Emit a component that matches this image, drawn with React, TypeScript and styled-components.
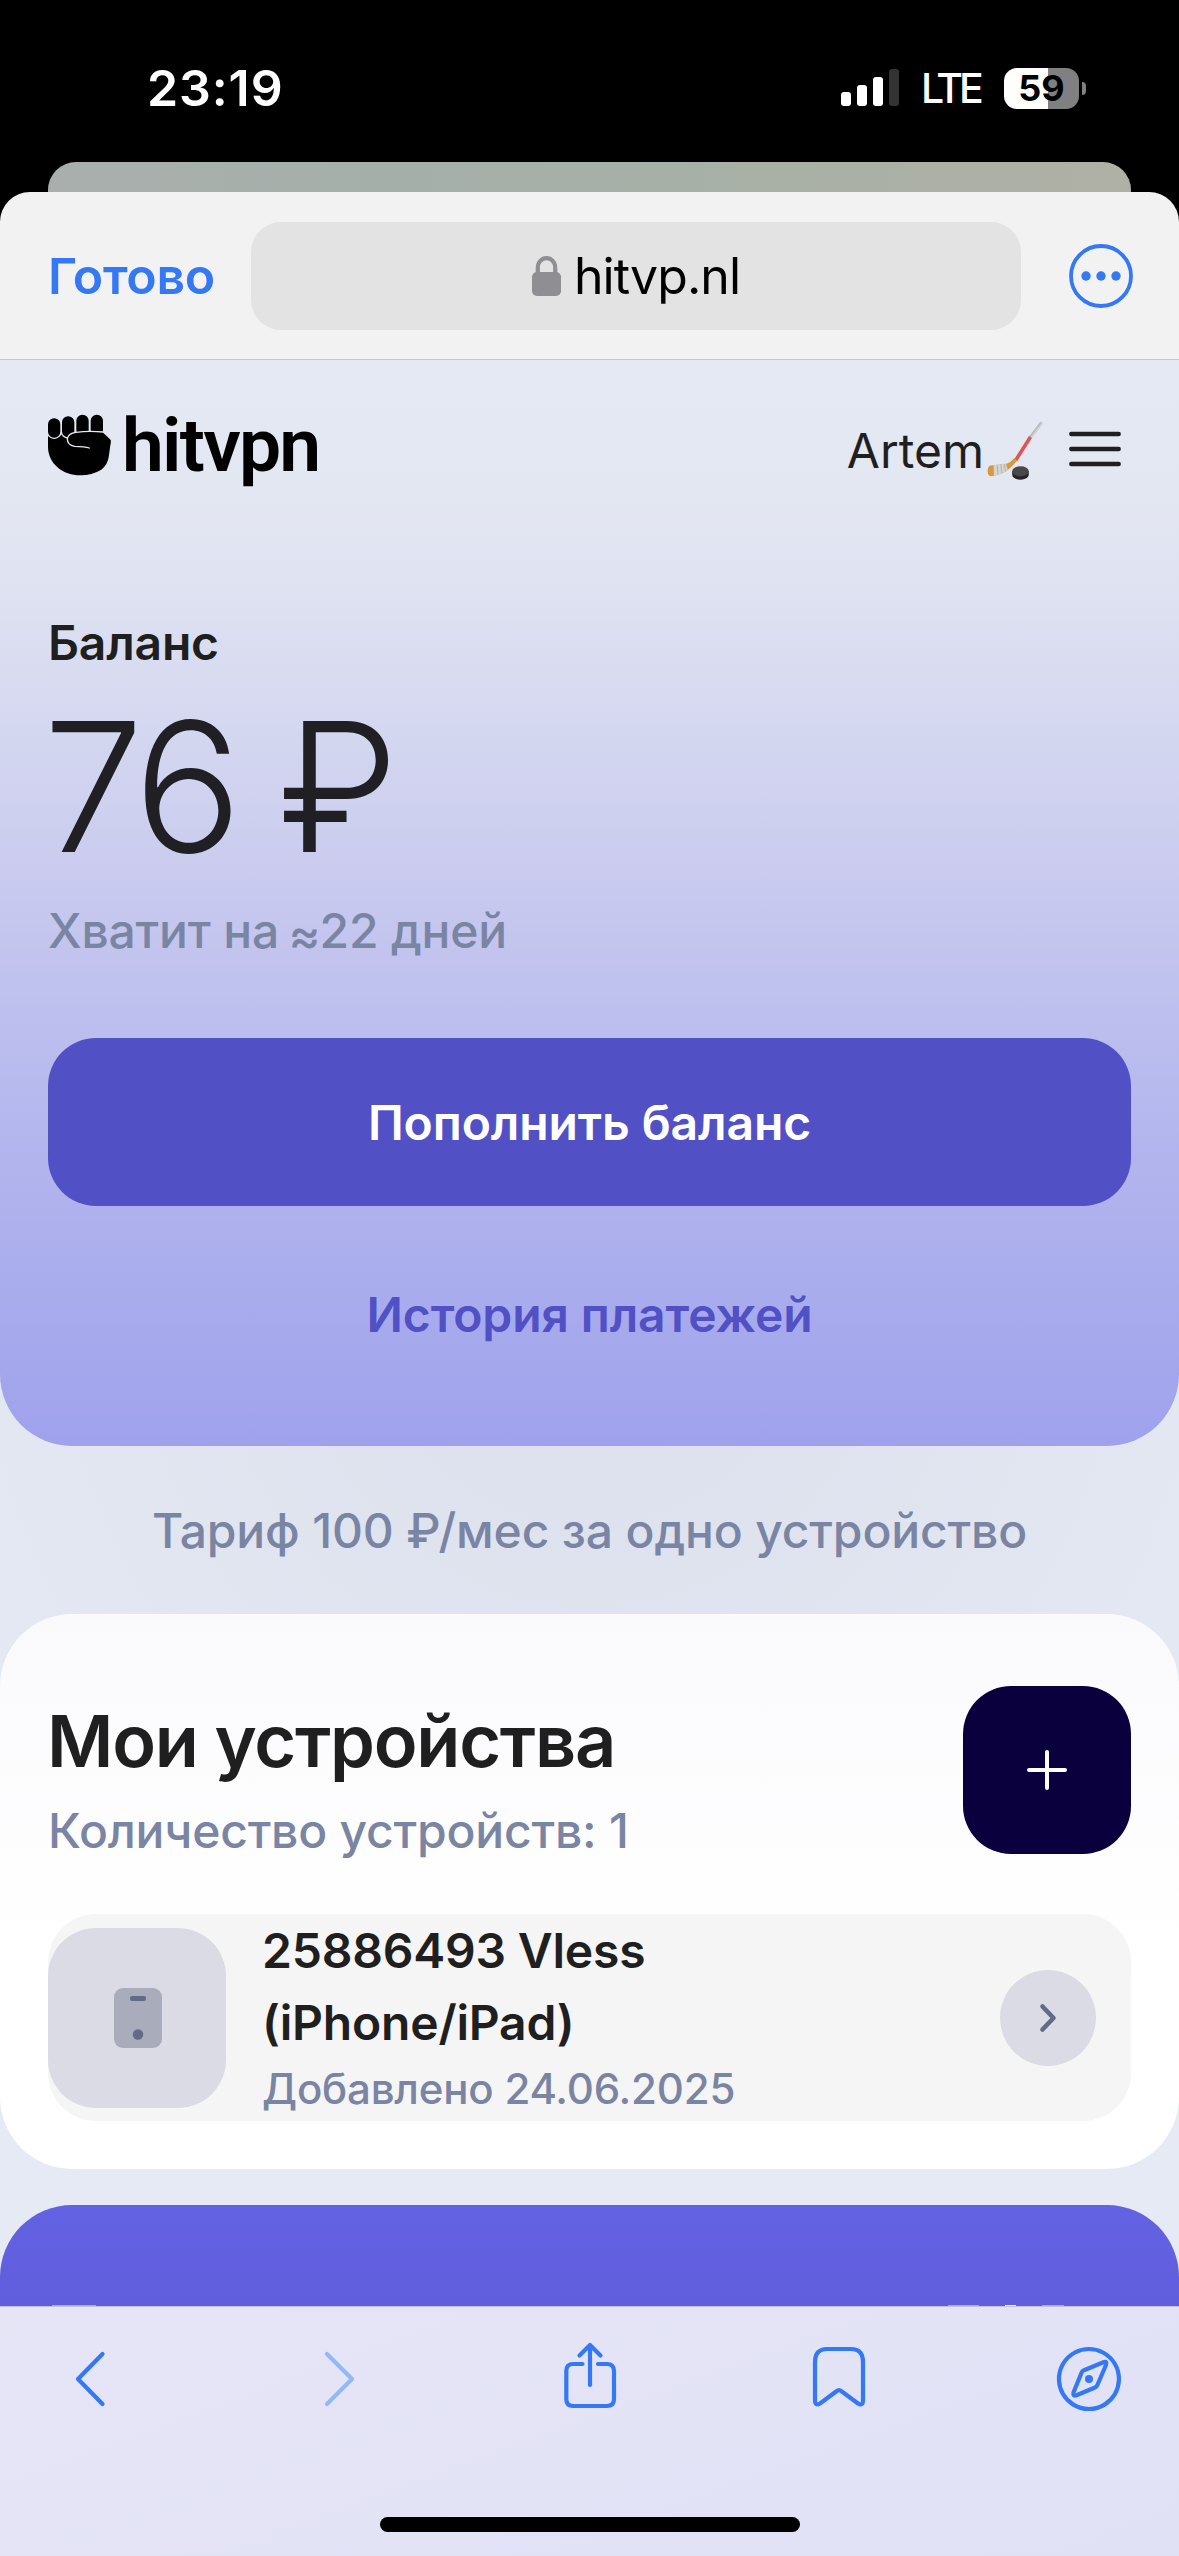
import React from "react";
import styled, { createGlobalStyle } from "styled-components";

const Global = createGlobalStyle`
  * { box-sizing: border-box; }
  body { margin: 0; background: #000; font-family: Inter, "Liberation Sans", sans-serif; }
  button { border: 0; padding: 0; background: none; font: inherit; }
  svg { display: block; flex: none; overflow: visible; }
`;

const Screen = styled.div`
  width: 1179px;
  height: 2556px;
  display: flex;
  flex-direction: column;
  overflow: hidden;
  background: #000;
`;

/* Status bar */
const StatusBar = styled.div`
  height: 162px;
  flex: none;
  display: flex;
  justify-content: space-between;
  padding: 58px 93px 0 147px;
`;
const Clock = styled.div`
  font-size: 50px;
  font-weight: 600;
  line-height: 60px;
  letter-spacing: 0.9px;
  color: #fff;
`;
const StatusIcons = styled.div`
  display: flex;
  align-items: center;
  height: 60px;
`;
const Network = styled.span`
  margin-left: 22px;
  width: 83px;
  font-size: 41px;
  font-weight: 500;
  line-height: 60px;
  letter-spacing: -4px;
  color: #fff;
`;
const Battery = styled.div`
  width: 75px;
  height: 41px;
  border-radius: 13px;
  background: linear-gradient(90deg, #fff 44px, #808080 44px);
  display: flex;
  align-items: center;
  justify-content: center;
  font-size: 36px;
  font-weight: 700;
  color: #000;
`;
const BatteryTip = styled.div`
  width: 4px;
  height: 13px;
  margin-left: 3px;
  border-radius: 0 4px 4px 0;
  background: #808080;
`;

/* Sheet */
const BackCard = styled.div`
  height: 30px;
  flex: none;
  margin: 0 48px;
  border-radius: 28px 28px 0 0;
  background: linear-gradient(90deg, #aaafad 0%, #a5afaa 30%, #a6b0a7 55%, #adb0a6 85%, #afb0a6 100%);
`;
const Toolbar = styled.div`
  height: 168px;
  flex: none;
  display: flex;
  align-items: center;
  justify-content: space-between;
  padding: 0 46px 0 48px;
  border-radius: 30px 30px 0 0;
  border-bottom: 1px solid #c6c6c8;
  background: #f2f2f2;
`;
const Done = styled.button`
  width: 203px;
  text-align: left;
  font-size: 50px;
  font-weight: 600;
  letter-spacing: -0.3px;
  color: #3478f6;
`;
const AddressField = styled.div`
  width: 770px;
  height: 108px;
  border-radius: 30px;
  background: #e3e3e3;
  display: flex;
  align-items: center;
  justify-content: center;
  gap: 13px;
  font-size: 50px;
  letter-spacing: -0.95px;
  color: #000;
`;
const MoreButton = styled.button`
  margin-left: auto;
`;

/* Page */
const Page = styled.main`
  height: 1946px;
  flex: none;
  overflow: hidden;
  background:
    radial-gradient(circle 820px at 590px 950px, rgba(208, 213, 228, 0.5), rgba(208, 213, 228, 0) 100%),
    #e6eaf4;
`;
const Hero = styled.section`
  height: 1086px;
  padding: 0 48px 48px;
  border-radius: 0 0 72px 72px;
  background: linear-gradient(
    180deg,
    #e5e9f3 0%,
    #e3e7f2 12%,
    #dfe2f1 21%,
    #d5d8f0 33%,
    #c9caee 48%,
    #bec0ee 59%,
    #b2b5ed 73%,
    #a8abec 87%,
    #a0a1ed 100%
  );
`;
const SiteHeader = styled.header`
  height: 180px;
  display: flex;
  align-items: center;
`;
const Logo = styled.div`
  display: flex;
  align-items: center;
  gap: 10px;
  padding-bottom: 10px;
  font-family: Roboto, Inter, sans-serif;
  font-size: 75px;
  font-weight: 600;
  line-height: 88px;
  letter-spacing: -1.8px;
  color: #000;
`;
const User = styled.div`
  margin-left: auto;
  display: flex;
  align-items: center;
  gap: 2px;
  font-size: 48px;
  color: #1f1f1f;
`;
const MenuButton = styled.button`
  margin: 0 10px 3px 24px;
`;
const Balance = styled.div`
  padding-top: 67px;
  display: flex;
  flex-direction: column;
  gap: 18px;
`;
const Label = styled.div`
  font-size: 48px;
  font-weight: 600;
  line-height: 72px;
  letter-spacing: -0.2px;
  color: #1f1f1f;
`;
const Amount = styled.div`
  margin-left: -5px;
  font-size: 180px;
  font-weight: 300;
  line-height: 180px;
  letter-spacing: -7.2px;
  color: #202024;
`;
const Muted = styled.div<{ $size?: number; $line?: number }>`
  font-size: ${(p) => p.$size ?? 48}px;
  font-weight: 500;
  line-height: ${(p) => p.$line ?? 72}px;
  letter-spacing: -0.2px;
  color: #7a84a3;
`;
const Approx = styled.span`
  display: inline-block;
  width: 30px;
  margin-left: -2px;
  line-height: 1;
  text-indent: -1px;
  vertical-align: -4px;
`;
const Button = styled.button<{ $filled?: boolean }>`
  display: block;
  width: 100%;
  height: 168px;
  margin-top: ${(p) => (p.$filled ? 71 : 24)}px;
  border-radius: 48px;
  background: ${(p) => (p.$filled ? "#5150c5" : "transparent")};
  color: ${(p) => (p.$filled ? "#fff" : "#5150c5")};
  font-size: 48px;
  font-weight: 600;
  letter-spacing: -0.1px;
`;
const Tariff = styled.div`
  height: 168px;
  display: flex;
  align-items: center;
  justify-content: center;
  font-size: 48px;
  font-weight: 500;
  letter-spacing: -0.15px;
  color: #7a84a3;
`;
const Devices = styled.section`
  height: 555px;
  padding: 72px 48px 48px;
  border-radius: 72px;
  background: linear-gradient(180deg, #fafafd 0%, #fdfdfe 40%, #fff 65%);
`;
const DevicesHeader = styled.div`
  height: 168px;
  margin-bottom: 60px;
  display: flex;
  justify-content: space-between;
`;
const Title = styled.h2`
  margin: 1px 0 0 -1px;
  font-size: 72px;
  font-weight: 600;
  line-height: 108px;
  letter-spacing: -1.25px;
  color: #1f1f1f;
`;
const AddButton = styled.button`
  width: 168px;
  height: 168px;
  border-radius: 48px;
  background: #09003d;
  display: flex;
  align-items: center;
  justify-content: center;
`;
const DeviceRow = styled.div`
  height: 207px;
  border-radius: 48px;
  background: #f5f5f5;
  display: flex;
  align-items: center;
  padding-right: 35px;
`;
const DeviceIcon = styled.div`
  width: 178px;
  height: 180px;
  padding-left: 2px;
  border-radius: 48px;
  background: #dadbe4;
  display: flex;
  align-items: center;
  justify-content: center;
`;
const DeviceText = styled.div`
  flex: 1;
  height: 207px;
  padding-top: 1px;
  margin-left: 36px;
`;
const DeviceName = styled.div`
  width: 480px;
  font-size: 48px;
  font-weight: 600;
  line-height: 72px;
  letter-spacing: -0.2px;
  color: #1f1f1f;
`;
const Round = styled.div`
  width: 96px;
  height: 96px;
  border-radius: 50%;
  background: #dadbe4;
  display: flex;
  align-items: center;
  justify-content: center;
`;
const Promo = styled.section`
  height: 400px;
  margin-top: 36px;
  padding: 100px 115px 0 52px;
  border-radius: 72px;
  background: linear-gradient(180deg, #6362e2, #605edd 100px, #5f5dda);
  display: flex;
  justify-content: space-between;
`;
const Glyphs = styled.div`
  display: flex;
  gap: 26px;
`;
const Sliver = styled.i<{ $w: number; $a: number }>`
  width: ${(p) => p.$w}px;
  height: 1px;
  background: rgba(255, 255, 255, ${(p) => p.$a});
`;

/* Bottom bar */
const BottomBar = styled.nav`
  flex: 1;
  display: flex;
  flex-direction: column;
  align-items: center;
  justify-content: space-between;
  padding: 36px 0 24px;
  border-top: 1px solid #c2c1cd;
  background: linear-gradient(160deg, #e6e5f6 0%, #e4e4f6 35%, #e1e2f5 70%, #e1e1f5 100%);
`;
const Tabs = styled.div`
  width: 100%;
  padding: 0 54px;
  display: flex;
  justify-content: space-between;
`;
const HomeIndicator = styled.div`
  width: 420px;
  height: 15px;
  border-radius: 8px;
  background: #000;
`;

const Signal = () => (
  <svg width="58" height="38" viewBox="0 0 58 38">
    <rect x="0" y="23" width="10" height="14" rx="3" fill="#fff" />
    <rect x="16" y="16" width="10" height="21" rx="3" fill="#fff" />
    <rect x="32" y="8" width="10" height="29" rx="3" fill="#fff" />
    <rect x="48" y="0" width="10" height="37" rx="3" fill="#333" />
  </svg>
);

const Lock = () => (
  <svg width="29" height="40" viewBox="0 0 29 40">
    <rect x="0" y="16" width="29" height="24" rx="5" fill="#8e8e93" />
    <path d="M5.8 19V11.5a8.700 9.300 0 0 1 17.400 0V19" fill="none" stroke="#8e8e93" strokeWidth="4.2" />
  </svg>
);

const Fist = () => (
  <svg width="64" height="62" viewBox="24 20 192 186">
    <path d="M24 84L190 74L212 95Q214 104 211 114L206 150Q202 174 184 187Q155 204 122 204C68 204 24 168 24 118Z" fill="#000" />
    <g stroke="#e5e9f3" strokeWidth="4">
      <rect x="64" y="25" width="41" height="67" rx="20" />
      <rect x="107" y="20" width="41" height="70" rx="20" />
      <rect x="150" y="20" width="41" height="70" rx="20" />
      <rect x="22" y="31" width="41" height="62" rx="20" />
    </g>
    <path d="M148 122Q135 117 104 117Q82 113 82 95Q84 78 108 75Q145 70 190 74L211 94L200 150L150 150Z" fill="#000" />
    <path d="M148 122Q135 117 104 117Q82 113 82 95Q84 78 108 75Q145 70 190 74L213 96" fill="none" stroke="#e5e9f3" strokeWidth="4" strokeLinecap="round" />
  </svg>
);

const Hockey = () => (
  <svg width="59" height="62" viewBox="18 16 178 186">
    <path d="M186 26L151 72" stroke="#b9bdc2" strokeWidth="10" />
    <path d="M188 28L154 72" stroke="#dfe1e4" strokeWidth="3" />
    <path d="M152 70L107 141" stroke="#dd5656" strokeWidth="11" />
    <path d="M103 133L112 141Q98 160 80 172Q60 184 32 188Q23 187 23 172Q23 158 32 156L76 151Q92 148 103 133Z" fill="#d9973f" />
    <path d="M41 155L78 150L84 169Q66 182 42 186Z" fill="#d5d5d0" />
    <path d="M52 154L54 183M63 152L66 179M73 151L77 174" stroke="#aaa9a3" strokeWidth="2.5" />
    <path d="M97 174V184A25 15 0 0 0 147 184V174Z" fill="#252527" />
    <ellipse cx="122" cy="173" rx="25" ry="15" fill="#48484a" />
  </svg>
);

const tabIcons: { d: string; color?: string; dot?: boolean }[] = [
  { d: "M48.5 11L24 36L48.5 61" },
  { d: "M23 11L48 36L23 61", color: "#92b8f7" },
  { d: "M28.5 21H19Q12.3 21 12.3 28V56Q12.3 63 19 63H53Q60 63 60 56V28Q60 21 53 21H44M36 42V2M25.5 12.5L36 2L46.5 12.5" },
  { d: "M12 57V19Q12 6 24 6H48Q60 6 60 19V57Q60 63.5 55 60.5L38.5 48.2Q36 46.2 33.5 48.2L17 60.5Q12 63.5 12 57Z" },
  { d: "M36 6A30 30 0 1 1 35.9 6ZM51 19L31 27.2Q29.2 28 28.5 29.8L20.5 49.5Q19.5 53.5 23.5 52.3L42 44.5Q43.7 43.7 44.4 42L53 22Q54.2 18 51 19Z", dot: true },
];

export default function App() {
  return (
    <Screen>
      <Global />
      <StatusBar>
        <Clock>23:19</Clock>
        <StatusIcons>
          <Signal />
          <Network>LTE</Network>
          <Battery>59</Battery>
          <BatteryTip />
        </StatusIcons>
      </StatusBar>
      <BackCard />
      <Toolbar>
        <Done>Готово</Done>
        <AddressField>
          <Lock />
          hitvp.nl
        </AddressField>
        <MoreButton>
          <svg width="64" height="64" viewBox="0 0 64 64" fill="#3478f6">
            <circle cx="32" cy="32" r="30" fill="none" stroke="#3478f6" strokeWidth="3.8" />
            <circle cx="17" cy="32" r="4.7" />
            <circle cx="32" cy="32" r="4.7" />
            <circle cx="47" cy="32" r="4.7" />
          </svg>
        </MoreButton>
      </Toolbar>
      <Page>
        <Hero>
          <SiteHeader>
            <Logo>
              <Fist />
              hitvpn
            </Logo>
            <User>
              Artem
              <Hockey />
            </User>
            <MenuButton>
              <svg width="52" height="36" viewBox="0 0 52 36">
                <path d="M2.3 3H49.7M2.3 18H49.7M2.3 33H49.7" stroke="#1f1f1f" strokeWidth="4.4" strokeLinecap="round" />
              </svg>
            </MenuButton>
          </SiteHeader>
          <Balance>
            <Label>Баланс</Label>
            <Amount>76 ₽</Amount>
            <Muted>
              Хватит на <Approx>≈</Approx>22 дней
            </Muted>
          </Balance>
          <Button $filled>Пополнить баланс</Button>
          <Button>История платежей</Button>
        </Hero>
        <Tariff>Тариф 100 ₽/мес за одно устройство</Tariff>
        <Devices>
          <DevicesHeader>
            <div>
              <Title>Мои устройства</Title>
              <Muted>Количество устройств: 1</Muted>
            </div>
            <AddButton>
              <svg width="40" height="40" viewBox="0 0 40 40">
                <path d="M20 2V38M2 20H38" stroke="#fff" strokeWidth="4" strokeLinecap="round" />
              </svg>
            </AddButton>
          </DevicesHeader>
          <DeviceRow>
            <DeviceIcon>
              <svg width="48" height="60" viewBox="0 0 48 60">
                <rect width="48" height="60" rx="9" fill="#a8acbb" />
                <rect x="16" y="8" width="16" height="5" rx="2" fill="#616b87" />
                <circle cx="24" cy="46.5" r="5.2" fill="#616b87" />
              </svg>
            </DeviceIcon>
            <DeviceText>
              <DeviceName>25886493 Vless (iPhone/iPad)</DeviceName>
              <Muted $size={42} $line={60}>Добавлено 24.06.2025</Muted>
            </DeviceText>
            <Round>
              <svg width="16" height="28" viewBox="0 0 16 28">
                <path d="M2.5 2.5L13.5 14L2.5 25.5" fill="none" stroke="#616b87" strokeWidth="4.6" strokeLinecap="round" strokeLinejoin="round" />
              </svg>
            </Round>
          </DeviceRow>
        </Devices>
        <Promo>
          <Sliver $w={44} $a={0.45} />
          <Glyphs>
            <Sliver $w={31} $a={0.45} />
            <Sliver $w={11} $a={0.9} />
            <Sliver $w={22} $a={0.45} />
          </Glyphs>
        </Promo>
      </Page>
      <BottomBar>
        <Tabs>
          {tabIcons.map(({ d, color = "#3478f6", dot }) => (
            <svg key={d} width="72" height="72" viewBox="0 0 72 72">
              <path d={d} fill="none" stroke={color} strokeWidth="4.2" strokeLinecap="round" strokeLinejoin="round" />
              {dot && <circle cx="36" cy="36" r="4" fill={color} />}
            </svg>
          ))}
        </Tabs>
        <HomeIndicator />
      </BottomBar>
    </Screen>
  );
}
